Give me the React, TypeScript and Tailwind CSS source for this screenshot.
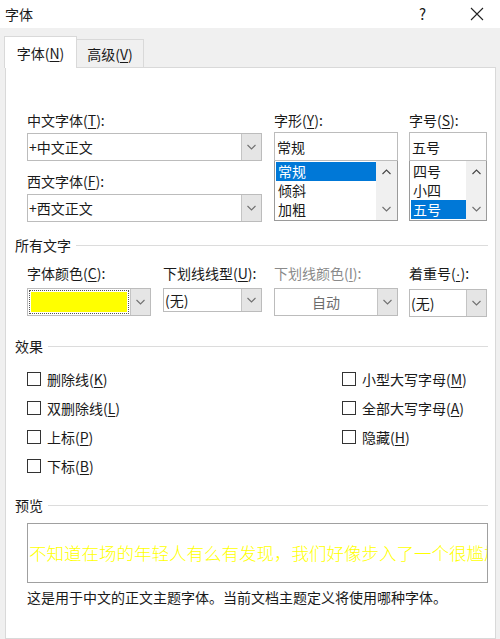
import React from 'react';

const Key: React.FC<{ k: string }> = ({ k }) => <span className="underline underline-offset-2">{k}</span>;

const Chevron: React.FC<{ up?: boolean }> = ({ up }) => (
  <svg width="9" height="6" viewBox="0 0 9 6" className="block">
    <polyline
      points={up ? '0.5,5 4.5,1 8.5,5' : '0.5,1 4.5,5 8.5,1'}
      fill="none"
      stroke={up ? '#444' : '#707070'}
      strokeWidth="1.1"
    />
  </svg>
);

const DropBtn: React.FC = () => (
  <div className="w-[20px] h-full bg-[#e5e5e5] border-l border-[#c4c4c4] flex items-center justify-center">
    <Chevron />
  </div>
);

const Combo: React.FC<{ value: string; w: string; h?: string; muted?: boolean }> = ({ value, w, h = 'h-[28px]', muted }) => (
  <div className={`${w} ${h} border border-[#bcbcbc] bg-white flex`}>
    <div className={`flex-1 px-[1px] flex items-center ${muted ? 'justify-center text-[#6d6d6d]' : ''}`}>{value}</div>
    <DropBtn />
  </div>
);

const ListBox: React.FC<{ value: string; items: string[]; selected: number; w: string; listW: string }> = ({ value, items, selected, w, listW }) => (
  <div className={w}>
    <div className="h-[29px] border border-[#bcbcbc] flex items-center px-[2px]">{value}</div>
    <div className="h-[60px] border border-t-0 border-[#9a9a9a] flex">
      <div className={`${listW} pt-[1px] pl-[1px]`}>
        {items.map((it, i) => (
          <div
            key={it}
            className={`h-[19px] leading-[19px] pl-[2px] ${i === selected ? 'bg-[#0078d7] text-white' : ''}`}
          >
            {it}
          </div>
        ))}
      </div>
      <div className="flex-1 bg-[#f0f0f0] flex flex-col items-center justify-between py-[8px]">
        <Chevron up />
        <Chevron />
      </div>
    </div>
  </div>
);

const Section: React.FC<{ title: string }> = ({ title }) => (
  <div className="flex items-center h-[18px] pl-[9px] pr-[7px]">
    <span className="leading-[18px]">{title}</span>
    <div className="flex-1 ml-[5px] h-px bg-[#dcdcdc]" />
  </div>
);

const Check: React.FC<{ label: React.ReactNode }> = ({ label }) => (
  <div className="h-[29px] flex items-center">
    <div className="w-[14px] h-[14px] border border-[#333] bg-white" />
    <span className="ml-[6px]">{label}</span>
  </div>
);

export default function App() {
  return (
    <div className="w-[500px] h-[639px] overflow-hidden bg-[#f0f0f0] text-[14px] text-[#1a1a1a] font-['Noto_Sans_CJK_SC',sans-serif] leading-[18px] flex flex-col">
      {/* Title bar */}
      <div className="h-[28px] bg-white flex items-center pl-[5px]">
        <span>字体</span>
        <span className="ml-auto mr-[44px] text-[15px]">?</span>
        <svg width="14" height="14" viewBox="0 0 14 14" className="mr-[16px]">
          <path d="M1 1 L13 13 M13 1 L1 13" stroke="#222" strokeWidth="1.1" />
        </svg>
      </div>

      {/* Tabs */}
      <div className="mt-[9px] ml-[4px] flex items-end h-[31px] relative z-10">
        <div className="w-[73px] h-[32px] bg-white border border-b-0 border-[#d9d9d9] flex items-center justify-center">
          字体(<Key k="N" />)
        </div>
        <div className="w-[67px] h-[29px] border border-l-0 border-b-0 border-[#d9d9d9] flex items-center justify-center">
          高级(<Key k="V" />)
        </div>
      </div>

      {/* Panel */}
      <div className="ml-[5px] w-[491px] flex-1 bg-white border border-[#d9d9d9] -mt-px">
        {/* Font family / style / size */}
        <div className="mt-[43px] pl-[21px] flex">
          <div className="w-[235px]">
            <div>中文字体(<Key k="T" />):</div>
            <div className="mt-[4px]">
              <Combo value="+中文正文" w="w-[235px]" />
            </div>
            <div className="mt-[11px]">西文字体(<Key k="F" />):</div>
            <div className="mt-[4px]">
              <Combo value="+西文正文" w="w-[235px]" />
            </div>
          </div>
          <div className="ml-[12px]">
            <div>字形(<Key k="Y" />):</div>
            <div className="mt-[3px]">
              <ListBox value="常规" items={['常规', '倾斜', '加粗']} selected={0} w="w-[124px]" listW="w-[101px]" />
            </div>
          </div>
          <div className="ml-[11px]">
            <div>字号(<Key k="S" />):</div>
            <div className="mt-[3px]">
              <ListBox value="五号" items={['四号', '小四', '五号']} selected={2} w="w-[78px]" listW="w-[56px]" />
            </div>
          </div>
        </div>

        {/* All text */}
        <div className="mt-[14px]">
          <Section title="所有文字" />
        </div>
        <div className="mt-[10px] pl-[21px] flex">
          <div className="w-[124px]">
            <div>字体颜色(<Key k="C" />):</div>
            <div className="mt-[6px] w-[124px] h-[28px] border border-[#bcbcbc] flex">
              <div className="flex-1 p-[1px]">
                <div className="h-full border border-dotted border-[#555] p-[1px]">
                  <div className="h-full bg-[#ffff00]" />
                </div>
              </div>
              <DropBtn />
            </div>
          </div>
          <div className="ml-[12px]">
            <div>下划线线型(<Key k="U" />):</div>
            <div className="mt-[6px]">
              <Combo value="(无)" w="w-[99px]" h="h-[24px]" />
            </div>
          </div>
          <div className="ml-[12px]">
            <div className="text-[#8a8a8a]">下划线颜色(<Key k="I" />):</div>
            <div className="mt-[6px]">
              <Combo value="自动" w="w-[124px]" muted />
            </div>
          </div>
          <div className="ml-[11px]">
            <div>
              着重号(<span className="underline underline-offset-2 font-['Liberation_Sans',sans-serif]">·</span>):
            </div>
            <div className="mt-[6px]">
              <Combo value="(无)" w="w-[78px]" />
            </div>
          </div>
        </div>

        {/* Effects */}
        <div className="mt-[20px]">
          <Section title="效果" />
        </div>
        <div className="mt-[9px] pl-[21px] flex">
          <div className="w-[315px]">
            <Check label={<>删除线(<Key k="K" />)</>} />
            <Check label={<>双删除线(<Key k="L" />)</>} />
            <Check label={<>上标(<Key k="P" />)</>} />
            <Check label={<>下标(<Key k="B" />)</>} />
          </div>
          <div>
            <Check label={<>小型大写字母(<Key k="M" />)</>} />
            <Check label={<>全部大写字母(<Key k="A" />)</>} />
            <Check label={<>隐藏(<Key k="H" />)</>} />
          </div>
        </div>

        {/* Preview */}
        <div className="mt-[16px]">
          <Section title="预览" />
        </div>
        <div className="mt-[9px] ml-[21px] w-[461px] h-[60px] border border-[#a0a0a0] overflow-hidden flex items-center">
          <div className="whitespace-nowrap text-[17.5px] font-light text-[#ffff00] pl-[1px] leading-[22px]">
            不知道在场的年轻人有么有发现，我们好像步入了一个很尴尬的年纪
          </div>
        </div>
        <div className="mt-[5px] ml-[21px]">这是用于中文的正文主题字体。当前文档主题定义将使用哪种字体。</div>
      </div>
    </div>
  );
}
